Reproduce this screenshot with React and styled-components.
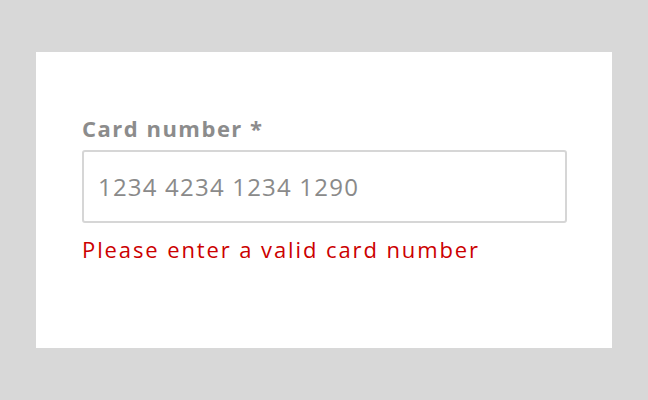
import React from "react";
import styled, { createGlobalStyle } from "styled-components";

const Global = createGlobalStyle`
  html, body { margin: 0; padding: 0; background: #d8d8d8; }
  body { font-family: "Open Sans", "Noto Sans", sans-serif; }
`;

const Page = styled.div`
  padding: 52px 36px;
  height: 400px;
  box-sizing: border-box;
`;

const Card = styled.div`
  background: #ffffff;
  height: 296px;
  box-sizing: border-box;
  padding: 60px 45px 0 46px;
  display: flex;
  flex-direction: column;
`;

const Label = styled.label`
  font-size: 22px;
  font-weight: 700;
  letter-spacing: 1.5px;
  color: #8c8c8c;
  line-height: 32px;
  margin-bottom: 6px;
`;

const Input = styled.input`
  height: 73px;
  box-sizing: border-box;
  border: 2px solid #d6d6d6;
  border-radius: 3px;
  padding: 0 14px;
  font-family: inherit;
  font-size: 24px;
  letter-spacing: 1.2px;
  color: #444;
  outline: none;
  &::placeholder { color: #8a8a8a; }
`;

const Error = styled.div`
  margin-top: 10px;
  font-size: 22px;
  letter-spacing: 1.9px;
  line-height: 32px;
  color: #cc0000;
`;

export default function App() {
  return (
    <>
      <Global />
      <Page>
        <Card>
          <Label>Card number *</Label>
          <Input placeholder="1234 4234 1234 1290" />
          <Error>Please enter a valid card number</Error>
        </Card>
      </Page>
    </>
  );
}
